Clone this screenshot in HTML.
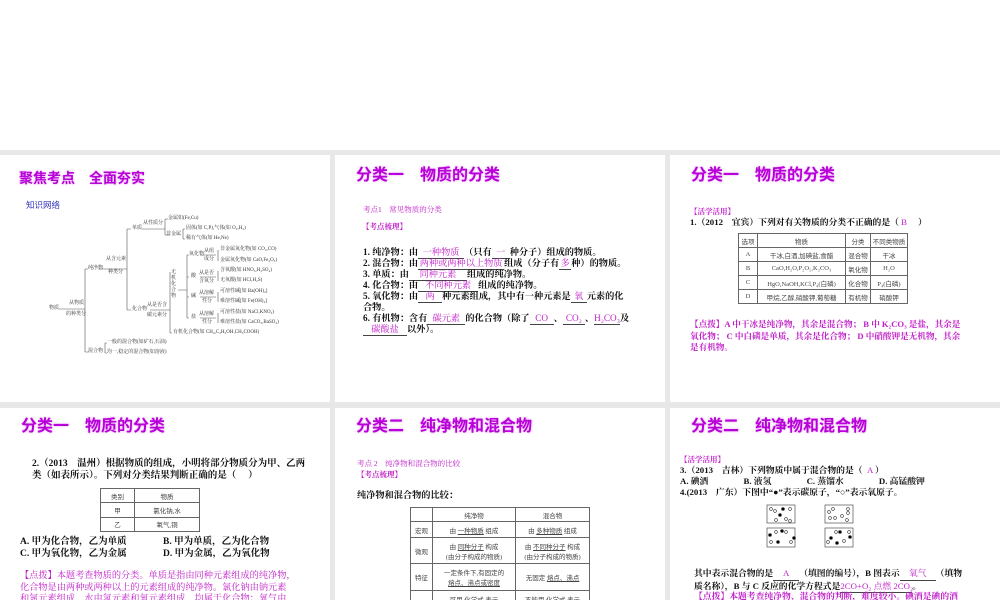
<!DOCTYPE html>
<html><head><meta charset="utf-8"><style>
*{margin:0;padding:0;box-sizing:border-box}
body{width:1000px;height:600px;background:#fff;position:relative;overflow:hidden;font-family:"Liberation Serif","Noto Serif CJK SC",serif}
.bg{position:absolute;left:0;top:150px;width:1000px;height:450px;background:#e8e8e8}
.s{position:absolute;background:#fff;overflow:hidden}
.t{position:absolute;font-family:"Liberation Sans","Noto Sans CJK SC",sans-serif;font-weight:bold;font-size:16px;color:#b800d8;text-shadow:0 0 2px #e6a0f0;white-space:pre;line-height:18px}
.a{position:absolute;white-space:pre;font-size:9.2px;line-height:11px;color:#111;font-weight:bold}
.m{color:#c020c8}
.u{border-bottom:0.8px solid #444;color:#c020c8;display:inline-block;text-align:center;font-weight:normal}
table{position:absolute;border-collapse:collapse;font-size:6.5px;color:#444;font-family:"Liberation Serif","Noto Sans CJK SC",serif}
td{border:0.8px solid #666;text-align:center;padding:0}
.d{position:absolute;font-size:5px;color:#333;white-space:pre;line-height:6px}
</style></head><body>
<div class="bg"></div>

<!-- slide 1 -->
<div class="s" style="left:0;top:155px;width:330px;height:247px">
<div class="t" style="left:19px;top:14px;font-size:14px">聚焦考点　全面夯实</div>
<div class="a" style="left:26px;top:45px;color:#3333bb;font-weight:normal;font-size:8.5px;font-family:'Liberation Sans','Noto Sans CJK SC',sans-serif">知识网络</div>
<svg style="position:absolute;left:0;top:0" width="330" height="247" fill="none" stroke="#555" stroke-width="0.6">
<path d="M59 154H85M85 114V197M85 114H88M85 197H88M98 114H127M127 74V155M127 74H131M127 155H131M142 74H165M165 64V80M165 64H168M165 80H170M183 74V84M183 74H185M183 84H185M150 155H170M170 117V178M170 178H172M178 135H187M187 100V163M187 100H189M187 122H189M187 142H189M187 163H189M200 100H216M200 122H216M200 142H216M200 163H216M218 95V106M218 116V126M218 137V147M218 158V168M105 188V198M105 188H107M105 198H107"/>
</svg>
<div class="d" style="left:49px;top:151px">物质</div>
<div class="d" style="left:69px;top:146px">从物质</div><div class="d" style="left:66px;top:157px">的种类分</div>
<div class="d" style="left:88px;top:111px">纯净物</div>
<div class="d" style="left:88px;top:194px">混合物</div>
<div class="d" style="left:106px;top:102px">从含元素</div><div class="d" style="left:108px;top:115px">种类分</div>
<div class="d" style="left:132px;top:71px">单质</div>
<div class="d" style="left:132px;top:152px">化合物</div>
<div class="d" style="left:143px;top:66px">从性质分</div>
<div class="d" style="left:147px;top:148px">从是否含</div><div class="d" style="left:147px;top:158px">碳元素分</div>
<div class="d" style="left:168px;top:61px">金属如(Fe,Cu)</div>
<div class="d" style="left:166px;top:77px">非金属</div>
<div class="d" style="left:186px;top:71px">固体(如 C,P),气体(如 O₂,H₂)</div>
<div class="d" style="left:186px;top:81px">稀有气体(如 He,Ne)</div>
<div class="d" style="left:171px;top:115px;width:6px;white-space:normal;line-height:6px">无机化合物</div>
<div class="d" style="left:189px;top:97px">氧化物</div>
<div class="d" style="left:191px;top:119px">酸</div>
<div class="d" style="left:191px;top:139px">碱</div>
<div class="d" style="left:191px;top:160px">盐</div>
<div class="d" style="left:204px;top:94px">从组</div><div class="d" style="left:204px;top:102px">成分</div>
<div class="d" style="left:199px;top:116px">从是否</div><div class="d" style="left:199px;top:124px">含氧分</div>
<div class="d" style="left:199px;top:136px">从溶解</div><div class="d" style="left:202px;top:144px">性分</div>
<div class="d" style="left:199px;top:157px">从溶解</div><div class="d" style="left:202px;top:165px">性分</div>
<div class="d" style="left:220px;top:92px">非金属氧化物(如 CO₂,CO)</div>
<div class="d" style="left:220px;top:103px">金属氧化物(如 CaO,Fe₂O₃)</div>
<div class="d" style="left:220px;top:113px">含氧酸(如 HNO₃,H₂SO₄)</div>
<div class="d" style="left:220px;top:123px">无氧酸(如 HCl,H₂S)</div>
<div class="d" style="left:220px;top:134px">可溶性碱[如 Ba(OH)₂]</div>
<div class="d" style="left:220px;top:144px">难溶性碱[如 Fe(OH)₃]</div>
<div class="d" style="left:220px;top:155px">可溶性盐(如 NaCl,KNO₃)</div>
<div class="d" style="left:220px;top:165px">难溶性盐(如 CaCO₃,BaSO₄)</div>
<div class="d" style="left:173px;top:175px">有机化合物(如 CH₄,C₂H₅OH,CH₃COOH)</div>
<div class="d" style="left:107px;top:185px">一般的混合物(如矿石,石油)</div>
<div class="d" style="left:107px;top:195px">均一,稳定的混合物(如溶液)</div>
</div>

<!-- slide 2 -->
<div class="s" style="left:335px;top:155px;width:330px;height:247px">
<div class="t" style="left:21px;top:12px">分类一　物质的分类</div>
<div class="a m" style="left:28px;top:49px;font-weight:normal;font-size:7.5px">考点1　常见物质的分类</div>
<div class="a m" style="left:27px;top:66px;font-size:7.5px">【考点梳理】</div>
<div class="a" style="left:28px;top:92px">1. 纯净物：由<span class="u" style="width:46px">一种物质</span>（只有<span class="u" style="width:18px">一</span>种分子）组成的物质。</div>
<div class="a" style="left:28px;top:103px">2. 混合物：由<span class="u" style="width:86px">两种或两种以上物质</span>组成（分子有<span class="u" style="width:12px">多</span>种）的物质。</div>
<div class="a" style="left:28px;top:114px">3. 单质：由<span class="u" style="width:58px">同种元素</span>组成的纯净物。</div>
<div class="a" style="left:28px;top:125px">4. 化合物：由<span class="u" style="width:60px">不同种元素</span>组成的纯净物。</div>
<div class="a" style="left:28px;top:136px">5. 氧化物：由<span class="u" style="width:24px">两</span>种元素组成，其中有一种元素是<span class="u" style="width:16px">氧</span>元素的化</div>
<div class="a" style="left:28px;top:147px">合物。</div>
<div class="a" style="left:28px;top:158px">6. 有机物：含有<span class="u" style="width:38px">碳元素</span>的化合物（除了<span class="u" style="width:24px">CO</span>、<span class="u" style="width:22px">CO₂</span>、<span class="u" style="width:26px">H₂CO₃</span>及</div>
<div class="a" style="left:28px;top:169px"><span class="u" style="width:44px">碳酸盐</span>以外）。</div>
</div>

<!-- slide 3 -->
<div class="s" style="left:670px;top:155px;width:330px;height:247px">
<div class="t" style="left:21px;top:12px">分类一　物质的分类</div>
<div class="a m" style="left:20px;top:51px;font-size:7.5px">【活学活用】</div>
<div class="a" style="left:20px;top:62px;font-size:8.8px">1.（2012　宜宾）下列对有关物质的分类不正确的是（<span class="m" style="font-weight:normal"> B </span>　）</div>
<table style="left:68px;top:78px;width:170px;height:71px">
<tr><td style="width:19px">选项</td><td style="width:88px">物质</td><td style="width:25px">分类</td><td>不同类物质</td></tr>
<tr><td>A</td><td>干冰,白酒,加碘盐,食醋</td><td>混合物</td><td>干冰</td></tr>
<tr><td>B</td><td>CaO,H₂O,P₂O₅,K₂CO₃</td><td>氧化物</td><td>H₂O</td></tr>
<tr><td>C</td><td>HgO,NaOH,KCl,P₄(白磷)</td><td>化合物</td><td>P₄(白磷)</td></tr>
<tr><td>D</td><td>甲烷,乙醇,硝酸钾,葡萄糖</td><td>有机物</td><td>硝酸钾</td></tr>
</table>
<div class="a m" style="left:20px;top:164px;line-height:11.5px;font-size:8.6px">【点拨】A 中干冰是纯净物，其余是混合物； B 中 K₂CO₃ 是盐，其余是
氧化物； C 中白磷是单质，其余是化合物； D 中硝酸钾是无机物，其余
是有机物。</div>
</div>

<!-- slide 4 -->
<div class="s" style="left:0;top:408px;width:330px;height:192px">
<div class="t" style="left:21px;top:10px">分类一　物质的分类</div>
<div class="a" style="left:32px;top:51px;line-height:11.5px;font-size:9.5px">2.（2013　温州）根据物质的组成，小明将部分物质分为甲、乙两
类（如表所示）。下列对分类结果判断正确的是（<span class="m"> </span>　）</div>
<table style="left:100px;top:80px;width:100px;height:44px">
<tr><td style="width:34px">类别</td><td>物质</td></tr>
<tr><td>甲</td><td>氯化钠,水</td></tr>
<tr><td>乙</td><td>氧气,铜</td></tr>
</table>
<div class="a" style="left:20px;top:129px;line-height:11.5px;font-size:9.5px">A. 甲为化合物，乙为单质
C. 甲为氧化物，乙为金属</div>
<div class="a" style="left:163px;top:129px;line-height:11.5px;font-size:9.5px">B. 甲为单质，乙为化合物
D. 甲为金属，乙为氧化物</div>
<div class="a m" style="left:20px;top:162px;line-height:11.5px;font-weight:normal;font-size:9.2px">【点拨】本题考查物质的分类。单质是指由同种元素组成的纯净物，
化合物是由两种或两种以上的元素组成的纯净物。氯化钠由钠元素
和氯元素组成，水由氢元素和氧元素组成，均属于化合物；氧气由</div>
</div>

<!-- slide 5 -->
<div class="s" style="left:335px;top:408px;width:330px;height:192px">
<div class="t" style="left:21px;top:10px">分类二　纯净物和混合物</div>
<div class="a m" style="left:22px;top:50px;font-weight:normal;font-size:7.5px">考点 2　纯净物和混合物的比较</div>
<div class="a m" style="left:22px;top:61px;font-size:7.5px">【考点梳理】</div>
<div class="a" style="left:22px;top:82px">纯净物和混合物的比较：</div>
<table style="left:75px;top:99px;width:180px;height:100px">
<tr style="height:14px"><td style="width:22px"></td><td style="width:83px">纯净物</td><td>混合物</td></tr>
<tr style="height:16px"><td>宏观</td><td>由 <u>一种物质</u> 组成</td><td>由 <u>多种物质</u> 组成</td></tr>
<tr style="height:26px"><td>微观</td><td>由 <u>同种分子</u> 构成<br>(由分子构成的物质)</td><td>由 <u>不同种分子</u> 构成<br>(由分子构成的物质)</td></tr>
<tr style="height:27px"><td>特征</td><td>一定条件下,有固定的<br><u>熔点、沸点或密度</u></td><td>无固定 <u>熔点、沸点</u></td></tr>
<tr><td></td><td>可用 化学式 表示</td><td>不能用 化学式 表示</td></tr>
</table>
</div>

<!-- slide 6 -->
<div class="s" style="left:670px;top:408px;width:330px;height:192px">
<div class="t" style="left:21px;top:10px">分类二　纯净物和混合物</div>
<div class="a m" style="left:10px;top:46px;font-size:7.5px">【活学活用】</div>
<div class="a" style="left:10px;top:57px;font-size:8.8px">3.（2013　吉林）下列物质中属于混合物的是（<span class="m" style="font-weight:normal">  A </span>）</div>
<div class="a" style="left:10px;top:68px;font-size:8.8px">A. 碘酒　　　　B. 液氢　　　　C. 蒸馏水　　　　D. 高锰酸钾</div>
<div class="a" style="left:10px;top:79px;font-size:8.8px">4.(2013　广东）下图中“●”表示碳原子，“○”表示氧原子。</div>
<svg style="position:absolute;left:0;top:0" width="330" height="192" stroke="#333" stroke-width="0.6">
<g fill="none"><rect x="97" y="97" width="28" height="18"/><rect x="155" y="97" width="28" height="18"/><rect x="97" y="120" width="28" height="19"/><rect x="155" y="120" width="28" height="19"/></g>
<g fill="#fff"><circle cx="101" cy="101" r="1.4"/><circle cx="105" cy="103" r="1.4"/><circle cx="120" cy="101" r="1.4"/><circle cx="116" cy="111" r="1.4"/><circle cx="120" cy="113" r="1.4"/><circle cx="106" cy="112" r="1.4"/><circle cx="159" cy="104" r="1.4"/><circle cx="163" cy="101" r="1.4"/><circle cx="178" cy="101" r="1.4"/><circle cx="178" cy="105" r="1.4"/><circle cx="160" cy="110" r="1.4"/><circle cx="165" cy="110" r="1.4"/><circle cx="172" cy="108" r="1.4"/><circle cx="177" cy="112" r="1.4"/><circle cx="106" cy="124" r="1.4"/><circle cx="116" cy="124" r="1.4"/><circle cx="101" cy="134" r="1.4"/><circle cx="121" cy="134" r="1.4"/><circle cx="158" cy="134" r="1.4"/><circle cx="166" cy="124" r="1.4"/><circle cx="179" cy="124" r="1.4"/><circle cx="174" cy="133" r="1.4"/></g>
<g fill="#000"><circle cx="113" cy="101" r="1.5"/><circle cx="110" cy="107" r="1.5"/><circle cx="100" cy="127" r="1.5"/><circle cx="112" cy="123" r="1.5"/><circle cx="124" cy="130" r="1.5"/><circle cx="108" cy="134" r="1.5"/><circle cx="161" cy="130" r="1.5"/><circle cx="170" cy="124" r="1.5"/><circle cx="180" cy="129" r="1.5"/><circle cx="167" cy="135" r="1.5"/></g>
</svg>
<div class="a" style="left:24px;top:160px;line-height:11.5px;font-size:8.8px">其中表示混合物的是<span class="u" style="width:26px">A</span>（填图的编号），B 图表示<span class="u" style="width:36px">氧气</span>（填物
质名称），B 与 C 反应的化学方程式是<span class="u" style="width:72px">2CO+O₂ 点燃 2CO₂</span>。</div>
<div class="a m" style="left:24px;top:183px;font-size:8.8px">【点拨】本题考查纯净物、混合物的判断，难度较小。碘酒是碘的酒</div>
</div>
</body></html>
